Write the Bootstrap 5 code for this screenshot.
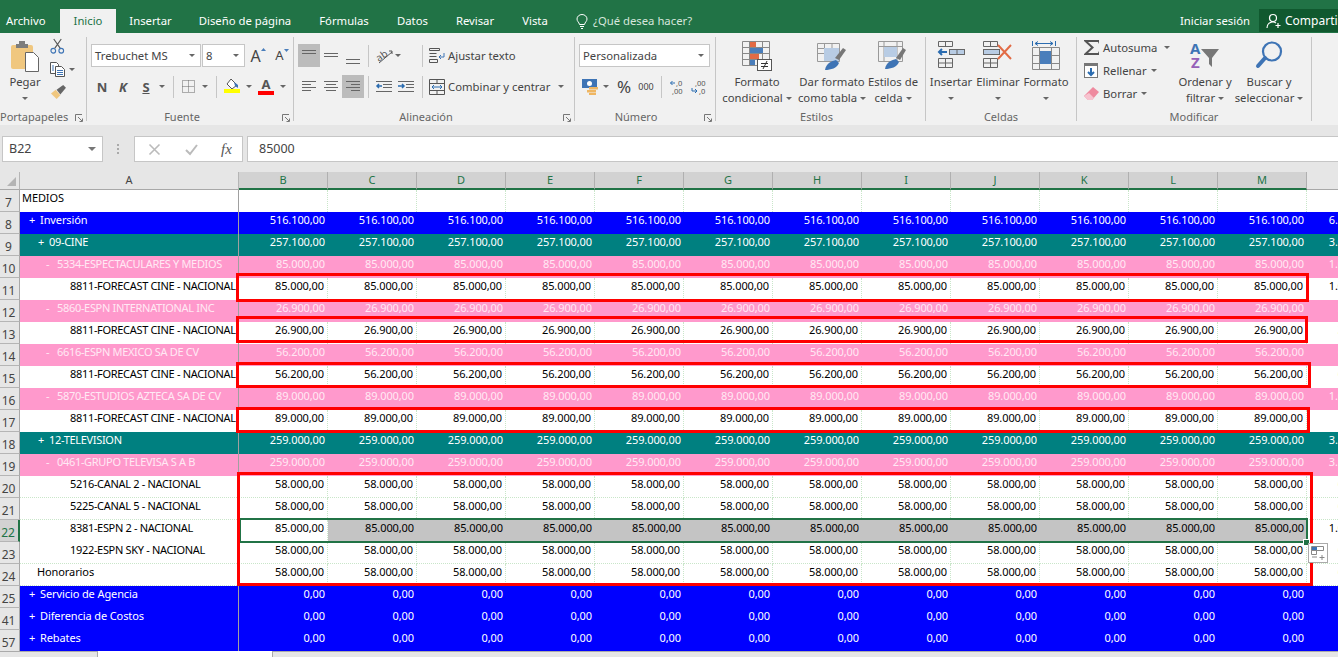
<!DOCTYPE html>
<html lang="es"><head><meta charset="utf-8"><title>Excel</title>
<link href="https://cdn.jsdelivr.net/npm/bootstrap@5.3.0/dist/css/bootstrap.min.css" rel="stylesheet">
<style>
html,body{width:1338px;height:657px;overflow:hidden;background:#e6e6e6}
body{font-family:"Noto Sans","Liberation Sans",sans-serif;font-size:11.3px;color:#444;line-height:16px}
.tbar{height:33px;background:#217346;padding-top:9px;color:#fff;font-size:11.3px}
.tabi{height:24px;line-height:24px;text-align:center;white-space:nowrap}
.tabi.act{background:#f1f1f1;color:#217346}
.t60{width:60px;text-align:left;padding-left:6px}.t56{width:56px}.t69{width:69px}.t120{width:120px}.t78{width:78px}.t59{width:59px}.t66{width:66px}.t54{width:54px}
.ask{padding-left:14px;color:#d6e6dc;height:24px;line-height:24px;gap:5px}
.login{margin-left:auto;width:88px;height:24px;line-height:24px}
.share{width:79px;height:23px;line-height:23px;background:#10592f;padding-left:7px;gap:3px;white-space:nowrap;overflow:hidden;font-size:12px}
.rib{height:92px;background:#f1f1f1;padding-top:4px}
.grp{height:84px;border-right:1px solid #c6c6c6;flex:none}
.g86{width:87px}.g207{width:207px}.g281{width:281px}.g141{width:141px}.g210{width:210px}.g151{width:151px}.g235{width:235px}
.gbody{height:72px;display:flow-root}
.glab{height:12px;line-height:16px;text-align:center;color:#666;position:relative;white-space:nowrap;font-size:11px}
.p20{padding-right:20px}.p16{padding-right:16px}.p18{padding-right:18px}.p8{padding-right:8px}
.launch{position:absolute;right:3px;top:5px}
.tools{display:grid;height:23px;align-items:center;justify-items:center;padding-left:4px}
.r1{margin-top:7px}.r2{margin-top:8px}
.f1{grid-template-columns:110px 1px 43px 26px 22px}
.f2{grid-template-columns:22px 20px 26px 6px 16px 14px 20px 2px 30px 3px 32px 1px}
.a1{grid-template-columns:22px 22px 22px 8px 24px 4px 17px 10px 20px auto}
.a2{grid-template-columns:22px 22px 22px 8px 23px 22px 10px 20px 108px 12px}
.n1{grid-template-columns:131px}
.n2{grid-template-columns:22px 10px 26px 18px 12px 20px 22px}
.onh{background:#bcbcbc;width:22px;height:23px;display:flex;align-items:center;justify-content:center}
.cmb{height:23px;background:#fff;border:1px solid #c6c6c6;display:flex;align-items:center;justify-content:space-between;padding:0 5px 0 3px;width:100%;white-space:nowrap}
.tri{display:inline-block;width:0;height:0;border-left:3px solid transparent;border-right:3px solid transparent;border-top:3px solid #666;flex:none}
.tri-lg{border-left-width:4px;border-right-width:4px;border-top-width:4px;border-top-color:#777}
.vsep{width:1px;height:22px;background:#c6c6c6}
.jl{justify-self:start;white-space:nowrap;padding-left:1px}
.bld{font-weight:700;font-size:13px;color:#555;line-height:16px}
.fs13{font-size:13px}.fs16{font-size:17px}.sm10{font-size:9px}
.bigbtn{flex:none;display:flex;flex-direction:column;align-items:center;height:72px;white-space:nowrap;line-height:16px}
.bic{height:37px;padding-top:4px;display:flex;justify-content:center}
.btn-line{display:flex;align-items:center;gap:3px;height:16px}
.b82{width:82px}.b68{width:68px}.b54{width:54px}.b50{width:50px}.b44{width:44px}.b52{width:52px}.b103{width:103px;flex:none}.b78{width:78px}
.clipcol{padding-top:2px}
.srow{height:23px;display:grid;grid-template-columns:7px 16px 3px auto;align-items:center;justify-items:start;white-space:nowrap}
.scol{margin-top:-1px}
.autos{display:flex;gap:7px;align-items:center}.tgt{display:flex;gap:4px;align-items:center}
.fbar{height:26px;margin-top:11px;display:flex;align-items:stretch;color:#444;font-size:12.5px}
.nbox{width:101px;margin-left:2px;background:#fff;border:1px solid #c6c6c6;padding-left:6px;display:flex;align-items:center;justify-content:space-between;padding-right:6px}
.ndots{width:31px;display:flex;align-items:center;justify-content:center}
.bbox{width:109px;background:#fff;border:1px solid #c6c6c6;display:grid;grid-template-columns:38px 36px 35px;align-items:center;justify-items:center}
.finp{flex:1;margin-left:4px;background:#fff;border:1px solid #c6c6c6;border-right:0;padding-left:11px;display:flex;align-items:center}
.fxi{font-family:"Liberation Serif",serif;font-style:italic;font-size:15px;color:#555}
.hoja-w{margin-top:10px;height:479px;overflow:hidden;position:relative;background:#fff}
table.hoja{width:1396px;table-layout:fixed;border-collapse:separate;border-spacing:0;font-size:11px;letter-spacing:-.1px;margin:0}
.table.hoja th,.table.hoja td{padding:0;height:22px;line-height:16px;vertical-align:top;white-space:nowrap;overflow:hidden;font-weight:400;box-sizing:border-box;box-shadow:none}
.c20{width:20px}.c219{width:219px}.c89{width:89px}
.table.hoja td.num{text-align:right;padding-right:3px}
.table.hoja td.ca{border-right:1px solid #a0a0a0}
.table.hoja td.cap{letter-spacing:-.32px}
.table.hoja thead th{height:17px;line-height:16px;background:#e6e6e6;text-align:center;font-size:11px;color:#444;border-right:1px solid #b5b5b5;border-bottom:1px solid #a8a8a8}
.table.hoja thead th.csel{background:#d2d2d2;color:#217346;border-right:1px solid #b0b0b0;border-bottom:2px solid #217346}
.table.hoja thead th.cblank{border-right:0;border-bottom:1px solid #a8a8a8}
.corner{width:0;height:0;border-style:solid;border-width:0 0 9px 9px;border-color:transparent transparent #b4b4b4 transparent;margin:5px 0 0 7px}
.table.hoja tbody th{background:#e6e6e6;color:#444;font-size:12px;text-align:center;padding-top:4px;line-height:17px;padding-right:2px;border-bottom:1px solid #b5b5b5;border-right:1px solid #a8a8a8}
.table.hoja tbody th.rsel{background:#d2d2d2;color:#217346;border-right:2px solid #217346}
tr.rb td{background:#00f;color:#fff}
tr.rt td{background:#008080;color:#fff}
tr.rp td{background:#f9c;color:#ffe9f4}
tr.rw td{background:#fff;color:#000;border-right:1px dotted #c9e6c9}
tr.rd td{border-bottom:1px dotted #c9e6c9}
tr.rw td.sel{background:#c4c4c4}
tr.rw td.nog{border-right:0}
.l0{padding-left:2px!important}.l1{padding-left:9px!important}.l2{padding-left:18px!important}.l3{padding-left:26px!important}.l4{padding-left:50px!important}.lh{padding-left:17px!important}
.mk{display:inline-block;width:11px}
.redbox{position:absolute;border:3px solid #f00;pointer-events:none}
.rb1{left:236px;top:101px;width:1073px;height:29px}
.rb2{left:236px;top:144px;width:1072px;height:27px}
.rb3{left:236px;top:190px;width:1075px;height:26px}
.rb4{left:236px;top:235px;width:1074px;height:26px}
.rb5{left:237px;top:300px;width:1076px;height:114px}
.selb{position:absolute;left:239px;top:346px;width:1069px;height:25px;border:2px solid #217346}
.handle{position:absolute;left:1303px;top:367px;width:7px;height:7px;background:#217346;border:1px solid #fff}
.flash{position:absolute;left:1308px;top:371px;width:20px;height:20px;background:#fff;border:1px solid #aaa;display:flex;align-items:center;justify-content:center}
.sbot{height:6px;display:flex}
.sb1{width:98px;background:#e6e6e6;border-top:1px solid #aaa;border-right:1px solid #aaa}
.sb2{width:174px;background:#fff}
.sb3{flex:1;background:#e6e6e6;border-top:1px solid #aaa;border-left:1px solid #aaa}
svg{display:block;overflow:visible}
</style></head><body>
<div class="d-flex flex-column">
<div class="tbar d-flex">
 <div class="tabi t60">Archivo</div><div class="tabi t56 act">Inicio</div><div class="tabi t69">Insertar</div><div class="tabi t120">Diseño de página</div><div class="tabi t78">Fórmulas</div><div class="tabi t59">Datos</div><div class="tabi t66">Revisar</div><div class="tabi t54">Vista</div>
 <div class="ask d-flex align-items-center"><svg width="12" height="15" viewBox="0 0 12 15" fill="none" stroke="#fff"><path d="M3.5 10.5C3 8 1 7.500 1 5a5 4.500 0 0 1 10 0c0 2.500-2 3-2.500 5.500zM4 12.500h4M5 14.500h2"/></svg><span>¿Qué desea hacer?</span></div>
 <div class="login tabi">Iniciar sesión</div>
 <div class="share d-flex align-items-center"><svg width="16" height="16" viewBox="0 0 16 16" fill="none" stroke="#fff" stroke-width="1.200"><circle cx="7" cy="5" r="3.500"/><path d="M1 15c0-4 3-6 6-6 1 0 2 .3 3 1M12 10v5M9.500 12.500h5"/></svg><span>Compartir</span></div>
</div>
<div class="rib d-flex">
 <!-- Portapapeles -->
 <div class="grp g86"><div class="gbody d-flex">
   <div class="bigbtn b50"><div class="bic"><svg width="30" height="31" viewBox="0 0 30 31"><rect x="1" y="4" width="22" height="24" rx="2" fill="#f0c77f"/><path d="M6 3h3V0h6v3h3v4H6z" fill="#7d7d7d"/><path d="M15.500 11.500h8l5 5v14h-13z" fill="#fff" stroke="#666"/></svg></div><div>Pegar</div><div class="btn-line"><span class="tri"></span></div></div>
   <div class="clipcol"><svg width="15" height="15" viewBox="0 0 16 16" fill="none" stroke-width="1.200"><path d="M5 10 12 0M11 10 4 0" stroke="#555"/><circle cx="3.500" cy="12.500" r="2.500" stroke="#3e74b5"/><circle cx="12" cy="12.500" r="2.500" stroke="#3e74b5"/></svg>
   <div class="d-flex align-items-center gap-1 mt-2"><svg width="15" height="15" viewBox="0 0 15 15" fill="#fff" stroke="#555"><path d="M.5.500h6l2 2v9h-8z"/><path d="M5.500 4.500h6l3 3v7h-9z"/><path d="M7 8.500h6M7 10.500h6M7 12.500h6M2 4h2M2 6h2M2 8h2" stroke="#3e74b5"/></svg><span class="tri"></span></div>
   <svg class="mt-2" width="16" height="15" viewBox="0 0 17 16"><path d="M1 9l6 6 4-4-5-6z" fill="#f0c77f"/><path d="M7 5l7-5 3 3-6 7z" fill="#666"/></svg></div>
  </div><div class="glab p20"><span>Portapapeles</span><svg class="launch" width="8" height="8" viewBox="0 0 8 8" fill="none" stroke="#777"><path d="M.5 7V.5H7M3 3l4 4M4.500 7.500h3v-3"/></svg></div></div>
 <!-- Fuente -->
 <div class="grp g207"><div class="gbody">
   <div class="tools f1 r1"><div class="cmb"><span>Trebuchet MS</span><span class="tri"></span></div><span></span><div class="cmb"><span>8</span><span class="tri"></span></div>
    <div class="d-flex align-items-start"><span class="fs-6 lh-1">A</span><svg width="5" height="3" viewBox="0 0 5 3"><path d="M0 3 2.500 0 5 3z" fill="#4a7ebb"/></svg></div>
    <div class="d-flex align-items-start"><span class="lh-1 fs13">A</span><svg width="5" height="3" viewBox="0 0 5 3"><path d="M0 0 2.500 3 5 0z" fill="#4a7ebb"/></svg></div></div>
   <div class="tools f2 r2"><span class="bld">N</span><span class="bld fst-italic">K</span><span class="bld text-decoration-underline">S</span><span class="tri"></span><span class="vsep"></span>
    <svg width="13" height="13" viewBox="0 0 13 13" fill="none" stroke="#666" stroke-dasharray="1 1"><path d="M.5.500h12v12H.5zM6.500.500v12M.5 6.500h12"/></svg><span class="tri"></span><span class="vsep"></span>
    <svg width="16" height="15" viewBox="0 0 16 15"><path d="M7 0l6 6-5 4-5-5z" fill="#fff" stroke="#555"/><path d="M10 3l4 3v3l-3-2z" fill="#3e74b5"/><rect y="10" width="16" height="4" fill="#ff0"/></svg><span class="tri"></span>
    <div class="d-flex flex-column align-items-center"><span class="bld lh-1">A</span><svg width="16" height="4" viewBox="0 0 16 4"><rect width="16" height="4" fill="#f00"/></svg></div><span class="tri"></span></div>
  </div><div class="glab p16"><span>Fuente</span><svg class="launch" width="8" height="8" viewBox="0 0 8 8" fill="none" stroke="#777"><path d="M.5 7V.5H7M3 3l4 4M4.500 7.500h3v-3"/></svg></div></div>
 <!-- Alineación -->
 <div class="grp g281"><div class="gbody">
   <div class="tools a1 r1"><div class="onh"><svg width="14" height="12" viewBox="0 0 14 12" stroke="#666"><path d="M0 .5h14M0 3.500h14"/></svg></div><div><svg width="14" height="8" viewBox="0 0 14 8" stroke="#666"><path d="M0 1.500h14M0 4.500h14"/></svg></div><div><svg width="14" height="12" viewBox="0 0 14 12" stroke="#666" class="mt-2"><path d="M0 5.500h14M0 9.500h14"/></svg></div><span class="vsep"></span>
    <svg width="17" height="15" viewBox="0 0 17 15"><text x="0" y="11" transform="rotate(-35 6 8)" font-size="10" fill="#555" font-family="Noto Sans">ab</text><path d="M3 15 16 4M13 3h3v3" stroke="#555" fill="none"/></svg><span class="tri"></span><span></span><span class="vsep"></span>
    <svg width="16" height="15" viewBox="0 0 16 15" fill="none" stroke="#555"><path d="M.5.500h10v2H.5zM.5 5.500h7M.5 8.500h7M.5 11.500h8v3H.5z"/><path d="M15 5v4h-5M12 7l-2 2 2 2" stroke="#3e74b5"/></svg><span class="jl">Ajustar texto</span></div>
   <div class="tools a2 r2"><div><svg width="14" height="11" viewBox="0 0 14 11" stroke="#666"><path d="M0 .5h14M0 3.500h9M0 6.500h14M0 9.500h9"/></svg></div><div><svg width="14" height="11" viewBox="0 0 14 11" stroke="#666"><path d="M0 .5h14M2 3.500h10M0 6.500h14M2 9.500h10"/></svg></div><div class="onh"><svg width="14" height="11" viewBox="0 0 14 11" stroke="#666"><path d="M0 .5h14M5 3.500h9M0 6.500h14M5 9.500h9"/></svg></div><span class="vsep"></span>
    <svg width="16" height="12" viewBox="0 0 16 12" fill="none" stroke="#666"><path d="M0 .5h16M7 3.500h9M7 6.500h9M0 10.500h16"/><path d="M6 5H1M3 3 1 5l2 2" stroke="#2b6cb0" stroke-width="1.500"/></svg>
    <svg width="16" height="12" viewBox="0 0 16 12" fill="none" stroke="#666"><path d="M0 .5h16M8 3.500h8M8 6.500h8M0 10.500h16"/><path d="M0 5h6M4 3l2 2-2 2" stroke="#2b6cb0" stroke-width="1.500"/></svg><span class="vsep"></span>
    <svg width="16" height="16" viewBox="0 0 16 16" fill="none" stroke="#555"><path d="M.5.500h15v15H.5zM.5 4.500h15M.5 11.500h15M8 .5v4M8 11.500v4"/><path d="M3 8h10M5 6 3 8l2 2M11 6l2 2-2 2" stroke="#2b6cb0"/></svg><span class="jl">Combinar y centrar</span><span class="tri"></span></div>
  </div><div class="glab p16"><span>Alineación</span><svg class="launch" width="8" height="8" viewBox="0 0 8 8" fill="none" stroke="#777"><path d="M.5 7V.5H7M3 3l4 4M4.500 7.500h3v-3"/></svg></div></div>
 <!-- Número -->
 <div class="grp g141"><div class="gbody">
   <div class="tools n1 r1"><div class="cmb"><span>Personalizada</span><span class="tri"></span></div></div>
   <div class="tools n2 r2"><svg width="16" height="16" viewBox="0 0 16 16"><rect width="15" height="9" fill="#3e74b5"/><circle cx="7.500" cy="4.500" r="2.500" fill="#fff"/><rect x="7" y="8" width="9" height="2.500" fill="#efb662"/><rect x="5" y="11" width="9" height="2.500" fill="#efb662"/><rect x="7" y="14" width="7" height="2" fill="#efb662"/></svg><span class="tri"></span><span class="fs16 lh-1">%</span><span class="sm10">000</span><span class="vsep"></span>
    <svg width="15" height="15" viewBox="0 0 15 15"><text x="6" y="6.500" font-size="7.500" fill="#555" font-family="Noto Sans">,0</text><text x="2" y="14.500" font-size="7.500" fill="#555" font-family="Noto Sans">,00</text><path d="M5 4H.5M2.500 2 .5 4l2 2" fill="none" stroke="#2b6cb0"/></svg>
    <svg width="15" height="15" viewBox="0 0 15 15"><text x="4" y="6.500" font-size="7.500" fill="#555" font-family="Noto Sans">,00</text><text x="8" y="14.500" font-size="7.500" fill="#555" font-family="Noto Sans">,0</text><path d="M1 9v3h5M4 10l2 2-2 2" fill="none" stroke="#2b6cb0"/></svg></div>
  </div><div class="glab p18"><span>Número</span><svg class="launch" width="8" height="8" viewBox="0 0 8 8" fill="none" stroke="#777"><path d="M.5 7V.5H7M3 3l4 4M4.500 7.500h3v-3"/></svg></div></div>
 <!-- Estilos -->
 <div class="grp g210"><div class="gbody d-flex">
   <div class="bigbtn b82"><div class="bic"><svg width="30" height="30" viewBox="0 0 30 30" fill="none" stroke="#888"><path d="M.5.500h27v24H.5zM.5 6.500h27M.5 12.500h27M.5 18.500h27M7.500.5v24M20.500.5v24"/><path d="M8 1h6v5H8zM8 13h9v5H8z" fill="#e26b45" stroke="none"/><path d="M8 7h13v5H8zM8 19h5v5H8z" fill="#4a7ebb" stroke="none"/><rect x="15.500" y="18.500" width="14" height="11" fill="#fff" stroke="#555"/><path d="M19 22.500h7M19 25.500h7M25 20l-4 8" stroke="#333"/></svg></div><div>Formato</div><div class="btn-line">condicional<span class="tri"></span></div></div>
   <div class="bigbtn b68"><div class="bic"><svg width="30" height="30" viewBox="0 0 30 30" fill="none" stroke="#999"><path d="M.5 2.500h22v18H.5zM.5 7.500h22M.5 12.500h22M7.500 2.500v18M15 2.500v18"/><rect x="7" y="7" width="15" height="13" fill="#b8cce4" stroke="none"/><path d="M18 17 26 7l3 2-7 10z" fill="#777" stroke="none"/><path d="M8 29c1-7 7-9 11-10l3 3c-2 5-8 7-14 7z" fill="#3e74b5" stroke="none"/></svg></div><div>Dar formato</div><div class="btn-line">como tabla<span class="tri"></span></div></div>
   <div class="bigbtn b54"><div class="bic"><svg width="30" height="30" viewBox="0 0 30 30" fill="none" stroke="#999"><path d="M.5.500h24v20H.5zM.5 5.500h24M6 .5v20M19 .5v20"/><rect x="6" y="6" width="13" height="10" fill="#b8cce4" stroke="none"/><path d="M18 17 25 7l3 2-6 10z" fill="#777" stroke="none"/><path d="M7 28c1-7 7-9 11-10l3 3c-2 5-8 7-14 7z" fill="#3e74b5" stroke="none"/></svg></div><div>Estilos de</div><div class="btn-line">celda<span class="tri"></span></div></div>
  </div><div class="glab p8"><span>Estilos</span></div></div>
 <!-- Celdas -->
 <div class="grp g151"><div class="gbody d-flex">
   <div class="bigbtn b50"><div class="bic"><svg width="27" height="27" viewBox="0 0 27 27" fill="none" stroke="#666"><path d="M.5.500h14v5H.5zM7.500.5v5M.5 17.500h14v9H.5zM7.500 17.500v9M.5 22h14"/><rect x="11.500" y="8.500" width="15" height="5" fill="#b8cce4"/><path d="M19 8.500v5" /><path d="M9 11H1M4 8l-3 3 3 3" stroke="#2b6cb0" stroke-width="2"/></svg></div><div>Insertar</div><div class="btn-line"><span class="tri"></span></div></div>
   <div class="bigbtn b44"><div class="bic"><svg width="30" height="27" viewBox="0 0 30 27" fill="none" stroke="#666"><path d="M.5.500h14v5H.5zM7.500.5v5M.5 17.500h14v9H.5zM7.500 17.500v9M.5 22h14"/><rect x=".5" y="8.500" width="16" height="5" fill="#b8cce4"/><path d="M15 4l13 14M28 4 15 18" stroke="#e26b45" stroke-width="2"/></svg></div><div>Eliminar</div><div class="btn-line"><span class="tri"></span></div></div>
   <div class="bigbtn b52"><div class="bic"><svg width="28" height="31" viewBox="0 0 28 31" fill="none" stroke="#888"><path d="M.5 0v5M23.500 0v5M3 2.500h18M6 .5 3 2.500l3 2M18 .5l3 2-3 2" stroke="#2b6cb0"/><path d="M.5 6.500h27v22H.5zM7.500 6.500v22M19.500 6.500v22M.5 14.500h27M.5 22.500h27"/><rect x="8" y="10" width="11" height="13" fill="#4a7ebb" stroke="none"/></svg></div><div>Formato</div><div class="btn-line"><span class="tri"></span></div></div>
  </div><div class="glab"><span>Celdas</span></div></div>
 <!-- Modificar -->
 <div class="grp g235"><div class="gbody d-flex">
   <div class="b103 scol">
    <div class="srow"><span></span><svg width="16" height="15" viewBox="0 0 16 15"><path d="M0 0h15v4l-1-2H4l6 5.500L4 13h10l1-2v4H0v-1l7-6.500L0 1z" fill="#555"/></svg><span></span><div class="autos"><span>Autosuma</span><span class="tri"></span></div></div>
    <div class="srow"><span></span><svg width="14" height="15" viewBox="0 0 14 15" fill="none"><rect x=".5" y=".5" width="13" height="14" fill="#fff" stroke="#777"/><rect width="14" height="3" fill="#777"/><path d="M7 5v7M4 9l3 3 3-3" stroke="#2b6cb0" stroke-width="2"/></svg><span></span><div class="tgt"><span>Rellenar</span><span class="tri"></span></div></div>
    <div class="srow"><span></span><svg width="15" height="13" viewBox="0 0 15 13"><path d="M9 0l6 5-7 8H4L0 9z" fill="#ef8a9f"/><path d="M0 9l4 4h4l2-2-5-5z" fill="#f7c3cf"/></svg><span></span><div class="tgt"><span>Borrar</span><span class="tri"></span></div></div>
   </div>
   <div class="bigbtn b50"><div class="bic"><svg width="31" height="28" viewBox="0 0 31 28"><text x="0" y="13" font-size="15" font-weight="700" fill="#3e74b5" font-family="Noto Sans">A</text><text x="1" y="27" font-size="15" font-weight="700" fill="#9560b8" font-family="Noto Sans">Z</text><path d="M11 8h18l-7 9v9l-3-3v-6z" fill="#777"/></svg></div><div>Ordenar y</div><div class="btn-line">filtrar<span class="tri"></span></div></div>
   <div class="bigbtn b78"><div class="bic"><svg width="27" height="28" viewBox="0 0 27 28" fill="none"><circle cx="16" cy="10.500" r="9" stroke="#3e74b5" stroke-width="2.200"/><path d="M9 17 2 25" stroke="#3e74b5" stroke-width="4" stroke-linecap="round"/></svg></div><div>Buscar y</div><div class="btn-line">seleccionar<span class="tri"></span></div></div>
  </div><div class="glab"><span>Modificar</span></div></div>
</div>
<div class="fbar">
 <div class="nbox"><span>B22</span><span class="tri tri-lg"></span></div>
 <div class="ndots"><svg width="3" height="11" viewBox="0 0 3 11" fill="#aaa"><rect width="2" height="2"/><rect y="4" width="2" height="2"/><rect y="8" width="2" height="2"/></svg></div>
 <div class="bbox"><svg width="11" height="11" viewBox="0 0 11 11" stroke="#bbb" stroke-width="1.600"><path d="M.5.5l10 10M10.500.5l-10 10"/></svg><svg width="13" height="11" viewBox="0 0 13 11" fill="none" stroke="#bbb" stroke-width="2"><path d="M1 6l4 4 7-9"/></svg><span class="fxi">fx</span></div>
 <div class="finp">85000</div>
</div>
<div class="hoja-w" id="hw">
 <table class="table table-borderless hoja"><thead id="th"></thead><tbody id="tb"></tbody></table>
 <div class="selb"></div><div class="handle"></div>
 <div class="redbox rb1"></div><div class="redbox rb2"></div><div class="redbox rb3"></div><div class="redbox rb4"></div><div class="redbox rb5"></div>
 <div class="flash"><svg width="15" height="14" viewBox="0 0 15 14" fill="none" stroke="#888"><path d="M.5.500h12v4H.5z"/><rect x="1" y="1" width="5" height="3" fill="#3e74b5" stroke="none"/><path d="M.5 4.500h5v4h-5z"/><path d="M1 11h5M11 9v5M8.500 11.500h5"/></svg></div>
</div>
<div class="sbot"><div class="sb1"></div><div class="sb2"></div><div class="sb3"></div></div>
</div>
<script src="https://cdn.jsdelivr.net/npm/bootstrap@5.3.0/dist/js/bootstrap.bundle.min.js"></script>
<script>
const L="BCDEFGHIJKLM".split("");
document.getElementById("th").innerHTML='<tr><th class="c20"><div class="corner"></div></th><th class="c219">A</th>'+L.map(c=>'<th class="c89 csel">'+c+'</th>').join("")+'<th class="c89 cblank"></th></tr>';
const R=[
[7,"rw","l0","MEDIOS","",""],
[8,"rb","l1","+|Inversión","516.100,00","6.193.200,00"],
[9,"rt","l2 cap","+|09-CINE","257.100,00","3.085.200,00"],
[10,"rp","l3 cap","-|5334-ESPECTACULARES Y MEDIOS","85.000,00","1.020.000,00"],
[11,"rw","l4 cap","8811-FORECAST CINE - NACIONAL","85.000,00","1.020.000,00"],
[12,"rp","l3 cap","-|5860-ESPN INTERNATIONAL INC","26.900,00","322.800,00"],
[13,"rw","l4 cap","8811-FORECAST CINE - NACIONAL","26.900,00","322.800,00"],
[14,"rp","l3 cap","-|6616-ESPN MEXICO SA DE CV","56.200,00","674.400,00"],
[15,"rw","l4 cap","8811-FORECAST CINE - NACIONAL","56.200,00","674.400,00"],
[16,"rp","l3 cap","-|5870-ESTUDIOS AZTECA SA DE CV","89.000,00","1.068.000,00"],
[17,"rw","l4 cap","8811-FORECAST CINE - NACIONAL","89.000,00",""],
[18,"rt","l2 cap","+|12-TELEVISION","259.000,00","3.108.000,00"],
[19,"rp","l3 cap","-|0461-GRUPO TELEVISA S A B","259.000,00","3.108.000,00"],
[20,"rw rd","l4 cap","5216-CANAL 2 - NACIONAL","58.000,00","696.000,00"],
[21,"rw rd","l4 cap","5225-CANAL 5 - NACIONAL","58.000,00","696.000,00"],
[22,"rw","l4 cap","8381-ESPN 2 - NACIONAL","85.000,00","1.020.000,00"],
[23,"rw rd","l4 cap","1922-ESPN SKY - NACIONAL","58.000,00","696.000,00"],
[24,"rw rd","lh","Honorarios","58.000,00","696.000,00"],
[25,"rb","l1","+|Servicio de Agencia","0,00","0,00"],
[41,"rb","l1","+|Diferencia de Costos","0,00","0,00"],
[57,"rb","l1","+|Rebates","0,00","0,00"]];
document.getElementById("tb").innerHTML=R.map(r=>{
 const p=r[3].split("|"),t=p.length>1?'<span class="mk">'+p[0]+'</span>'+p[1]:p[0];
 let h='<tr class="'+r[1]+'"><th class="'+(r[0]==22?"rsel":"")+'">'+r[0]+'</th><td class="ca '+r[2]+'">'+t+'</td>';
 L.forEach((c,i)=>{h+='<td class="num'+(r[0]==22&&i>0?" sel nog":"")+'">'+r[4]+'</td>'});
 return h+'<td class="num nog">'+r[5]+'</td></tr>';
}).join("");
</script>
</body></html>
